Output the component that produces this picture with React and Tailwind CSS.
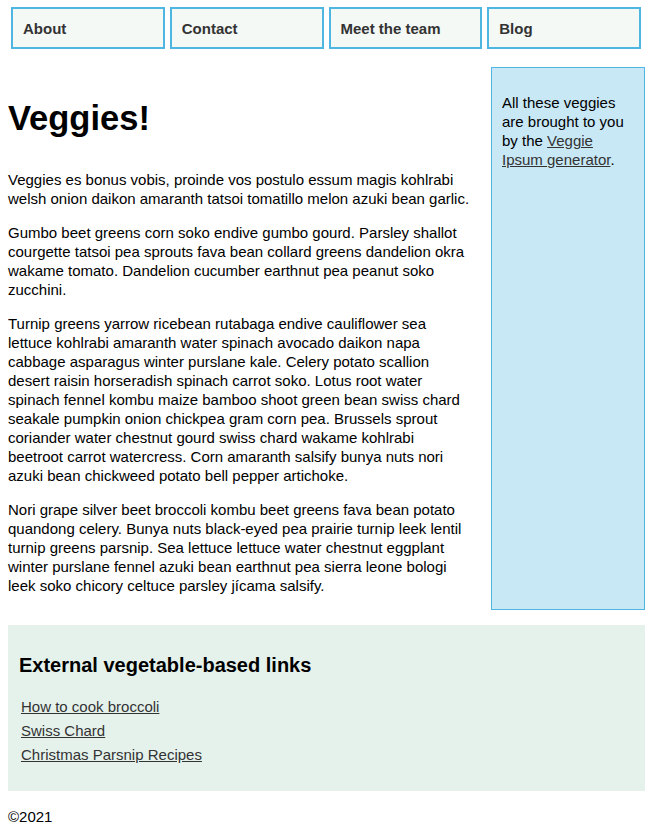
import React from 'react';

const navItems = ['About', 'Contact', 'Meet the team', 'Blog'];

const paragraphs = [
  'Veggies es bonus vobis, proinde vos postulo essum magis kohlrabi welsh onion daikon amaranth tatsoi tomatillo melon azuki bean garlic.',
  'Gumbo beet greens corn soko endive gumbo gourd. Parsley shallot courgette tatsoi pea sprouts fava bean collard greens dandelion okra wakame tomato. Dandelion cucumber earthnut pea peanut soko zucchini.',
  'Turnip greens yarrow ricebean rutabaga endive cauliflower sea lettuce kohlrabi amaranth water spinach avocado daikon napa cabbage asparagus winter purslane kale. Celery potato scallion desert raisin horseradish spinach carrot soko. Lotus root water spinach fennel kombu maize bamboo shoot green bean swiss chard seakale pumpkin onion chickpea gram corn pea. Brussels sprout coriander water chestnut gourd swiss chard wakame kohlrabi beetroot carrot watercress. Corn amaranth salsify bunya nuts nori azuki bean chickweed potato bell pepper artichoke.',
  'Nori grape silver beet broccoli kombu beet greens fava bean potato quandong celery. Bunya nuts black-eyed pea prairie turnip leek lentil turnip greens parsnip. Sea lettuce lettuce water chestnut eggplant winter purslane fennel azuki bean earthnut pea sierra leone bologi leek soko chicory celtuce parsley jícama salsify.',
];

const links = ['How to cook broccoli', 'Swiss Chard', 'Christmas Parsnip Recipes'];

export default function App() {
  return (
    <div className="bg-white text-[15px] leading-[19px] text-black pl-2 pr-[7px]" style={{ fontFamily: '"Liberation Sans", Arial, sans-serif' }}>
      {/* Nav */}
      <nav className="pt-[7px] pl-[3px] pr-[4px]">
        <ul className="grid grid-cols-4 gap-[5px]">
          {navItems.map(item => (
            <li key={item} className="h-[42px] border-2 border-[#4fb5e1] bg-[#f4f9f6] flex items-center px-[10px] font-bold text-[#333]">
              {item}
            </li>
          ))}
        </ul>
      </nav>

      {/* Main + aside */}
      <div className="grid grid-cols-[1fr_154px] gap-4 mt-[18px]">
        <main className="pr-[5px]">
          <h1 className="text-[34.5px] leading-[40px] font-bold mt-[31px] mb-[32px]">Veggies!</h1>
          {paragraphs.map((p, i) => (
            <p key={i} className="mb-[15px]">{p}</p>
          ))}
        </main>
        <aside className="border border-[#4fb5e1] bg-[#c8e8f6] px-[10px] pt-[25px] h-[543px]">
          <p>
            All these veggies are brought to you by the{' '}
            <a href="#" className="underline text-[#333]">Veggie Ipsum generator</a>.
          </p>
        </aside>
      </div>

      {/* Links section */}
      <section className="mt-[15px] bg-[#e5f2ec] h-[166px] px-[11px] pt-[28px]">
        <h2 className="text-[20px] leading-[24px] font-bold">External vegetable-based links</h2>
        <ul className="mt-[20px] pl-[2px] flex flex-col gap-[5px]">
          {links.map(l => (
            <li key={l}>
              <a href="#" className="underline text-[#333]">{l}</a>
            </li>
          ))}
        </ul>
      </section>

      <footer className="pt-[16px] pb-[8px]">
        <p>©2021</p>
      </footer>
    </div>
  );
}
